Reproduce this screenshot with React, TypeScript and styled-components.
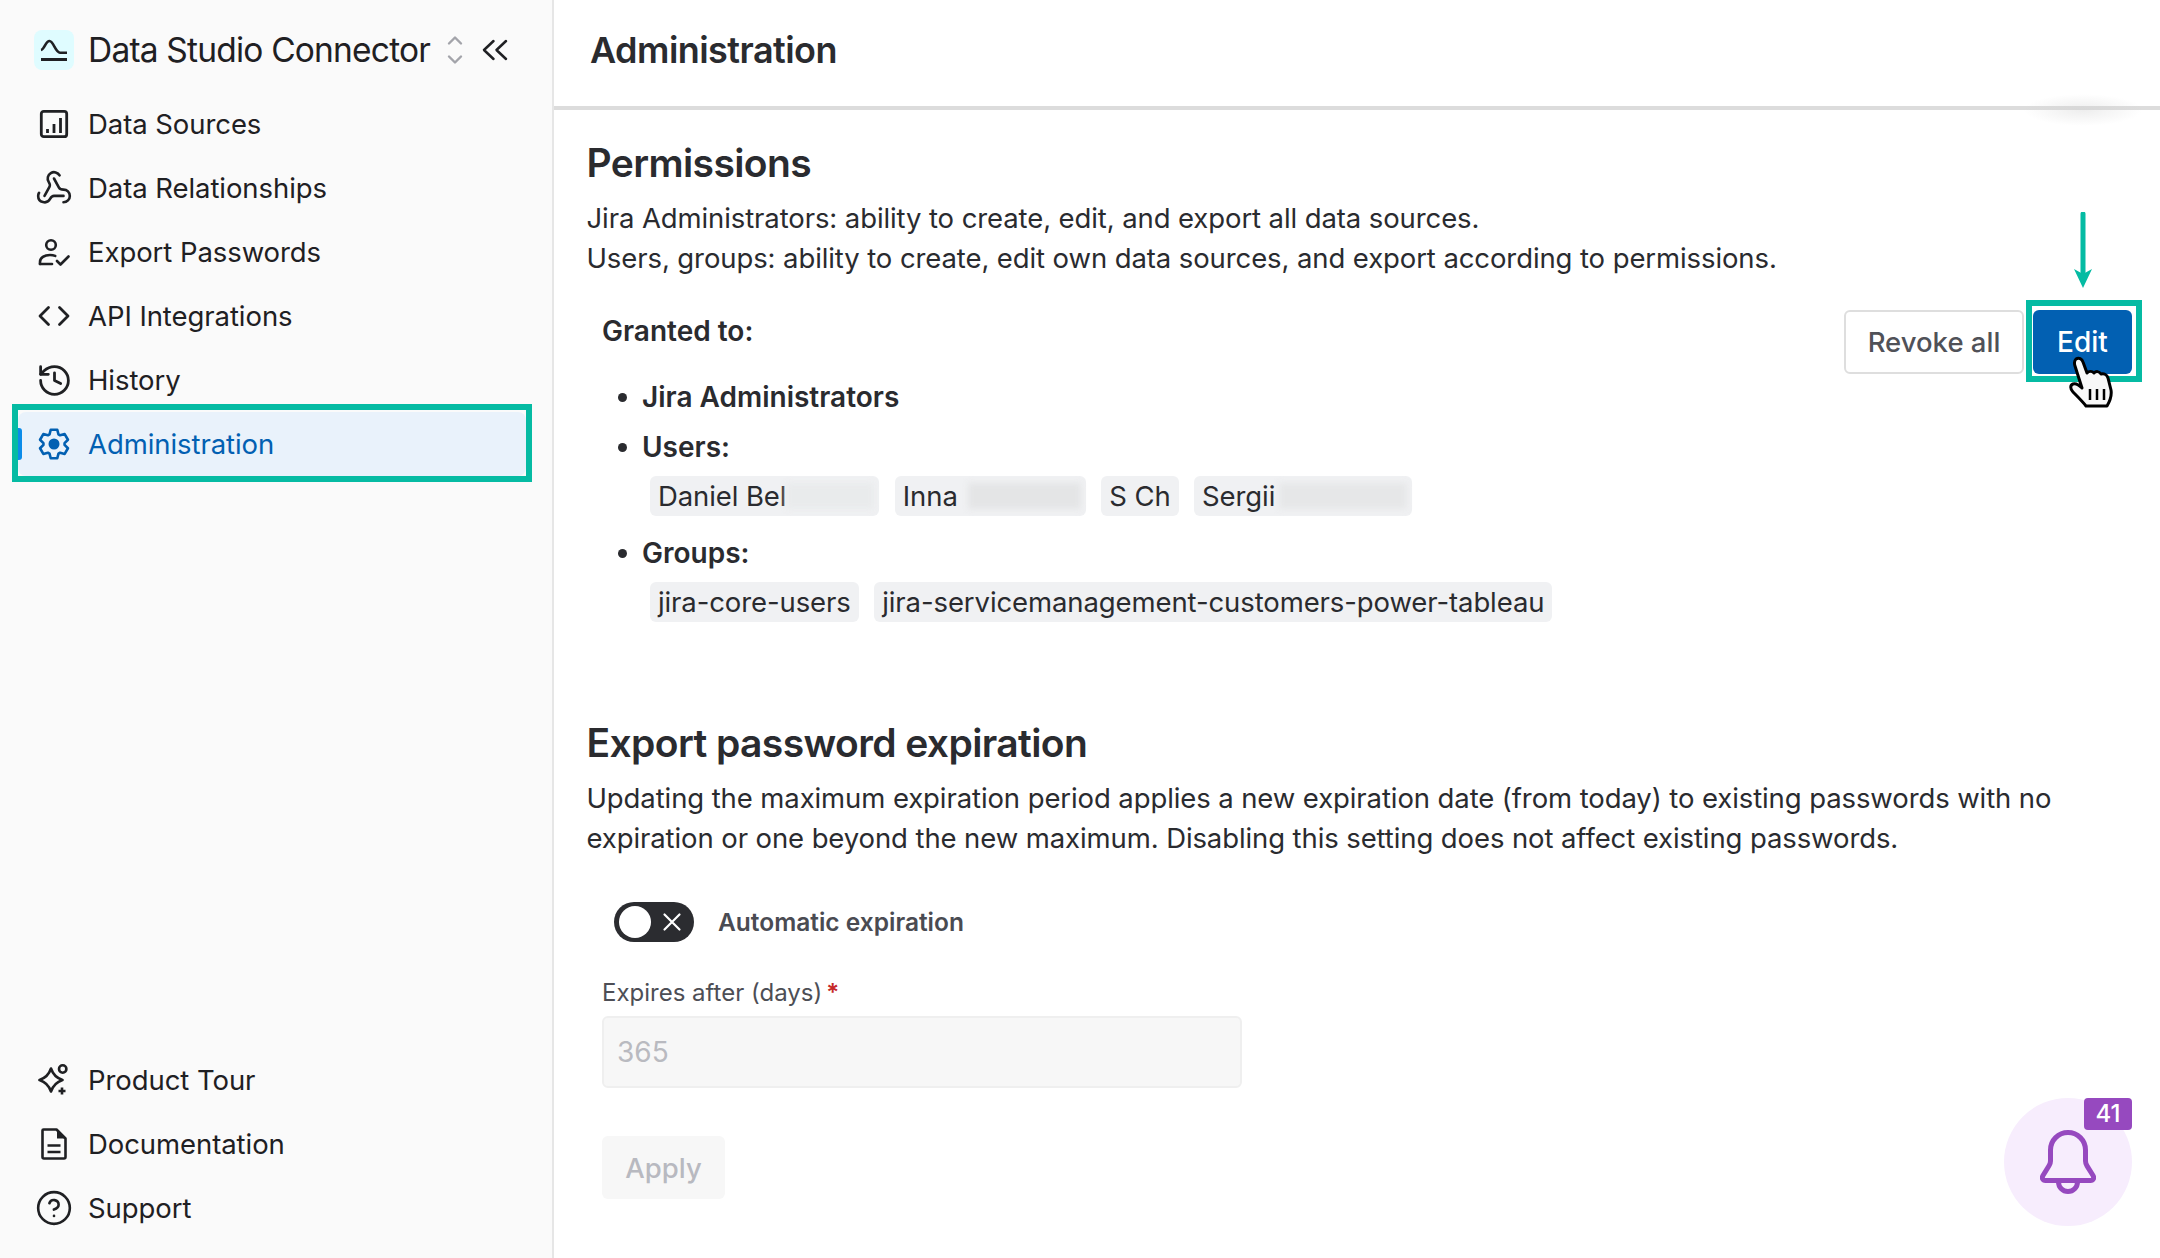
import type { ReactNode } from 'react';
import { Webhook, History, CircleHelp } from 'lucide-react';
import styled, { createGlobalStyle } from 'styled-components';

const GlobalStyle = createGlobalStyle`
  html, body {
    margin: 0;
    padding: 0;
    background: #fff;
  }
  * {
    box-sizing: border-box;
  }
  body {
    font-family: Inter, "Liberation Sans", sans-serif;
    color: #1f2023;
  }
`;

const Page = styled.div`
  width: 2160px;
  height: 1258px;
  display: flex;
  position: relative;
  overflow: hidden;
  background: #fff;
`;

const Sidebar = styled.aside`
  width: 554px;
  flex-shrink: 0;
  height: 100%;
  background: #fafafa;
  border-right: 2px solid #e6e6e6;
  display: flex;
  flex-direction: column;
  justify-content: space-between;
  padding: 30px 26px 18.5px 18px;
`;

const Brand = styled.div`
  display: flex;
  align-items: center;
  height: 40px;
  padding-left: 16px;
  margin-bottom: 22.5px;
`;

const LogoTile = styled.div`
  width: 40px;
  height: 40px;
  border-radius: 8px;
  background: #dffcff;
  flex-shrink: 0;
`;

const BrandName = styled.span`
  margin-left: 14px;
  font-size: 33.5px;
  letter-spacing: -0.8px;
  color: #1f2023;
  white-space: nowrap;
`;

const BrandActions = styled.div`
  display: flex;
  align-items: center;
  margin-left: 17px;
  gap: 19px;
  color: #1f2023;
`;

const Nav = styled.nav`
  display: flex;
  flex-direction: column;
`;

const NavItem = styled.div<{ $active?: boolean }>`
  position: relative;
  height: 63.9px;
  display: flex;
  align-items: center;
  gap: 19px;
  padding-left: 21px;
  border-radius: 8px;
  font-size: 27.5px;
  letter-spacing: -0.07px;
  white-space: nowrap;
  color: ${(p) => (p.$active ? '#0260b2' : '#1f2023')};
  background: ${(p) => (p.$active ? '#e9f2fb' : 'transparent')};
`;

const NavIcon = styled.span`
  width: 30px;
  height: 30px;
  display: flex;
  align-items: center;
  justify-content: center;
  flex-shrink: 0;
  svg {
    flex-shrink: 0;
  }
`;

const ActiveBar = styled.span`
  position: absolute;
  left: 0;
  top: 16px;
  width: 4px;
  height: 32px;
  border-radius: 0 3px 3px 0;
  background: #0b8ce9;
`;

const NavHighlight = styled.span`
  position: absolute;
  inset: -8px -6px -6px -6px;
  border: 6px solid #05bba3;
  pointer-events: none;
`;

const Main = styled.main`
  flex: 1;
  min-width: 0;
  display: flex;
  flex-direction: column;
`;

const TopBar = styled.header`
  position: relative;
  height: 110px;
  flex-shrink: 0;
  border-bottom: 4px solid #dcdcdc;
  padding-left: 36px;
  display: flex;
  align-items: center;
`;

const TopTitle = styled.h1`
  margin: 0 0 6px;
  font-size: 36px;
  font-weight: 600;
  letter-spacing: -0.55px;
  color: #2a2b2f;
`;

// soft smudge left over the divider in the original capture
const TopShadow = styled.span`
  position: absolute;
  right: 17px;
  bottom: -20px;
  width: 120px;
  height: 32px;
  background: radial-gradient(ellipse at center, rgba(205, 205, 205, 0.35) 0%, rgba(205, 205, 205, 0) 70%);
`;

const Content = styled.div`
  padding: 29px 28px 0 32.5px;
`;

const SectionTitle = styled.h2<{ $gap?: number }>`
  margin: ${(p) => p.$gap ?? 0}px 0 11px;
  font-size: 39px;
  line-height: 48px;
  font-weight: 600;
  letter-spacing: -0.6px;
  color: #2a2b2f;
`;

const Text = styled.p`
  margin: 0;
  font-size: 27.5px;
  letter-spacing: -0.1px;
  line-height: 40px;
  color: #2a2b2f;
`;

const GrantRow = styled.div`
  margin-top: 32px;
  display: flex;
  justify-content: space-between;
  align-items: flex-start;
`;

const GrantInfo = styled.div`
  padding-left: 15.5px;
`;

const GrantLabel = styled.div`
  font-size: 28px;
  line-height: 42px;
  font-weight: 600;
  color: #2a2b2f;
`;

const GrantList = styled.ul`
  list-style: none;
  margin: 25px 0 0;
  padding: 0 0 0 40px;
`;

const GrantItem = styled.li`
  position: relative;
  margin-bottom: 10px;
  font-size: 28px;
  line-height: 40px;
  font-weight: 600;
  color: #2a2b2f;
  &::before {
    content: '';
    position: absolute;
    left: -24px;
    top: 16px;
    width: 9px;
    height: 9px;
    border-radius: 50%;
    background: #2a2b2f;
  }
`;

const ChipRow = styled.div`
  display: flex;
  gap: 15.5px;
  margin: 9px 0 17px 8px;
`;

const Chip = styled.span`
  display: inline-flex;
  align-items: center;
  height: 40px;
  padding: 0 8px;
  border-radius: 6px;
  background: #f0f1f3;
  font-size: 27.5px;
  letter-spacing: -0.1px;
  font-weight: 400;
  white-space: nowrap;
  color: #2a2b2f;
`;

const Redacted = styled.span<{ $width: number; $offset: number; $shade: string }>`
  display: block;
  width: ${(p) => p.$width}px;
  height: 26px;
  margin-left: ${(p) => p.$offset}px;
  margin-right: -3px;
  background: ${(p) => p.$shade};
  filter: blur(3px);
`;

const Actions = styled.div`
  display: flex;
  gap: 9px;
`;

const OutlineButton = styled.button`
  width: 180px;
  height: 64px;
  border: 2px solid #dedede;
  border-radius: 6px;
  background: #fff;
  font: 500 27.5px Inter, sans-serif;
  color: #505158;
`;

const EditWrap = styled.div`
  position: relative;
`;

const PrimaryButton = styled.button`
  display: block;
  width: 99px;
  height: 64px;
  border: 0;
  border-radius: 6px;
  background: #0260b2;
  font: 500 28px Inter, sans-serif;
  color: #fff;
`;

const EditHighlight = styled.span`
  position: absolute;
  inset: -10px -10px -8px -7px;
  border: 6px solid #05bba3;
  pointer-events: none;
`;

const ArrowMark = styled.svg`
  position: absolute;
  left: 40px;
  top: -98px;
`;

const HandMark = styled.svg`
  position: absolute;
  left: 34px;
  top: 46px;
`;

const ToggleRow = styled.div`
  display: flex;
  align-items: center;
  gap: 24px;
  margin: 44px 0 0 27.5px;
`;

const Toggle = styled.div`
  width: 80px;
  height: 40px;
  border-radius: 20px;
  background: #2b2c30;
  display: flex;
  align-items: center;
  justify-content: space-between;
  padding: 0 12px 0 5px;
`;

const ToggleKnob = styled.span`
  width: 32px;
  height: 32px;
  border-radius: 50%;
  background: #fff;
`;

const ToggleLabel = styled.span`
  font-size: 24.5px;
  font-weight: 600;
  color: #4a4b52;
`;

const Form = styled.div`
  padding-left: 15.5px;
`;

const FieldLabel = styled.label`
  display: block;
  margin-top: 35px;
  font-size: 24px;
  line-height: 32px;
  color: #4d4e55;
`;

const Required = styled.span`
  color: #c62828;
  font-weight: 600;
  margin-left: 4px;
`;

const Field = styled.div`
  margin-top: 7px;
  width: 640px;
  height: 72px;
  padding: 0 13px;
  border: 2px solid #efefef;
  border-radius: 6px;
  background: #f7f7f7;
  font-size: 28px;
  line-height: 69px;
  color: #b9bac0;
`;

const DisabledButton = styled.button`
  display: block;
  margin-top: 48px;
  width: 123px;
  height: 63px;
  border: 0;
  border-radius: 6px;
  background: #f7f7f7;
  font: 500 27.5px Inter, sans-serif;
  color: #b8b9c0;
`;

const BellBubble = styled.div`
  position: absolute;
  right: 28px;
  bottom: 32px;
  width: 128px;
  height: 128px;
  border-radius: 50%;
  background: #f7edfd;
  display: flex;
  align-items: center;
  justify-content: center;
`;

const BellBadge = styled.span`
  position: absolute;
  right: 0;
  top: 0;
  width: 48px;
  height: 32px;
  border-radius: 4px;
  background: #9649bf;
  font-size: 24px;
  font-weight: 500;
  line-height: 32px;
  text-align: center;
  color: #fff;
`;

const LogoIcon = () => (
  <svg width="40" height="40" viewBox="0 0 40 40" fill="none" stroke="#1f2023" strokeLinecap="butt">
    <path d="M7 20c3.500-.5 4.500-9 8.500-9 4 0 6 11.700 10.500 11.700h7" strokeWidth="2.6" />
    <path d="M7 29.500h26" strokeWidth="3" />
  </svg>
);

const UpDownIcon = () => (
  <svg width="16" height="32" viewBox="0 0 16 32" fill="none" stroke="#a3a4aa" strokeWidth="2.4" strokeLinecap="round" strokeLinejoin="round">
    <path d="M2 9.500l6-6 6 6" />
    <path d="M2 22.500l6 6 6-6" />
  </svg>
);

const CollapseIcon = () => (
  <svg width="26" height="22" viewBox="0 0 26 22" fill="none" stroke="currentColor" strokeWidth="2.5" strokeLinecap="round" strokeLinejoin="round">
    <path d="M11.500 2L2 11l9.500 9" />
    <path d="M24 2l-9.500 9 9.500 9" />
  </svg>
);

const SourcesIcon = () => (
  <svg width="30" height="30" viewBox="0 0 30 30" fill="none" stroke="currentColor" strokeWidth="2.800">
    <rect x="2.300" y="2.300" width="25.400" height="25.400" rx="2.500" />
    <path d="M8.500 24v-4M15 24v-9M21.500 24V9" />
  </svg>
);

const UserCheckIcon = () => (
  <svg width="32" height="30" viewBox="0 0 32 30" fill="none" stroke="currentColor" strokeWidth="2.600" strokeLinecap="round" strokeLinejoin="round">
    <circle cx="13" cy="8" r="4.800" />
    <path d="M2 27v-2c0-4.200 4.400-7 10-7 2 0 3.700.3 5.200.9" />
    <path d="M2 27h12" />
    <path d="M19 24l3.500 3.500 8-8" />
  </svg>
);

const CodeIcon = () => (
  <svg width="32" height="30" viewBox="0 0 32 30" fill="none" stroke="currentColor" strokeWidth="2.800" strokeLinecap="round" strokeLinejoin="round">
    <path d="M10.500 6.500L2 15l8.500 8.500" />
    <path d="M21.500 6.500L30 15l-8.500 8.500" />
  </svg>
);

const gearPoints = Array.from({ length: 6 }, (_, tooth) =>
  [
    [-25, 10.6],
    [-13, 14.6],
    [13, 14.6],
    [25, 10.6],
  ]
    .map(([offset, radius]) => {
      const angle = ((tooth * 60 + offset) * Math.PI) / 180;
      return `${(16 + radius * Math.sin(angle)).toFixed(2)},${(16 - radius * Math.cos(angle)).toFixed(2)}`;
    })
    .join(' '),
).join(' ');

const GearIcon = () => (
  <svg width="32" height="32" viewBox="0 0 32 32" fill="none" stroke="currentColor" strokeWidth="2.600" strokeLinejoin="round">
    <polygon points={gearPoints} />
    <circle cx="16" cy="16" r="5.500" fill="currentColor" stroke="none" />
  </svg>
);

const TourIcon = () => (
  <svg width="32" height="32" viewBox="0 0 32 32" fill="none" stroke="currentColor" strokeWidth="2.600" strokeLinejoin="round">
    <path d="M13 4.500c2 6 5.500 9.500 11.500 11.500-6 2-9.500 5.500-11.500 11.500C11 21.500 7.500 18 1.500 16 7.500 14 11 10.500 13 4.500z" />
    <circle cx="24.700" cy="5" r="3.700" />
    <path d="M24 23.500v7M20.500 27h7" />
  </svg>
);

const DocIcon = () => (
  <svg width="30" height="32" viewBox="0 0 30 32" fill="none">
    <path d="M4.500 1.500h13L26.500 10.500V29c0 .9-.6 1.500-1.500 1.500H5c-.9 0-1.500-.6-1.500-1.500V2.500c0-.6.400-1 1-1z" stroke="currentColor" strokeWidth="2.600" strokeLinejoin="round" />
    <path d="M18 1.500l8.500 9H18z" fill="currentColor" />
    <path d="M8.500 17.500h13M8.500 24h13" stroke="currentColor" strokeWidth="2.600" />
  </svg>
);

const BellIcon = () => (
  <svg width="56" height="64" viewBox="0 0 56 64" fill="none" stroke="#9649bf" strokeWidth="5" strokeLinejoin="round">
    <path d="M10.500 20a17.500 17.500 0 0 1 35 0v11c0 2 .5 3.200 1.500 4.800l6 9.700c1.500 2.500.3 5-2.500 5h-45c-2.800 0-4-2.500-2.500-5l6-9.700c1-1.600 1.500-2.800 1.500-4.800z" />
    <path d="M18.500 52a9.500 9.500 0 0 0 19 0" />
  </svg>
);

interface LinkData {
  label: string;
  icon: ReactNode;
  active?: boolean;
}

const topLinks: LinkData[] = [
  { label: 'Data Sources', icon: <SourcesIcon /> },
  { label: 'Data Relationships', icon: <Webhook size={38} strokeWidth={1.65} /> },
  { label: 'Export Passwords', icon: <UserCheckIcon /> },
  { label: 'API Integrations', icon: <CodeIcon /> },
  { label: 'History', icon: <History size={37} strokeWidth={1.8} /> },
  { label: 'Administration', icon: <GearIcon />, active: true },
];

const bottomLinks: LinkData[] = [
  { label: 'Product Tour', icon: <TourIcon /> },
  { label: 'Documentation', icon: <DocIcon /> },
  { label: 'Support', icon: <CircleHelp size={38} strokeWidth={1.65} /> },
];

function SideLink({ label, icon, active }: LinkData) {
  return (
    <NavItem $active={active}>
      {active && <ActiveBar />}
      <NavIcon>{icon}</NavIcon>
      {label}
      {active && <NavHighlight />}
    </NavItem>
  );
}

export default function App() {
  return (
    <Page>
      <GlobalStyle />
      <Sidebar>
        <div>
          <Brand>
            <LogoTile>
              <LogoIcon />
            </LogoTile>
            <BrandName>Data Studio Connector</BrandName>
            <BrandActions>
              <UpDownIcon />
              <CollapseIcon />
            </BrandActions>
          </Brand>
          <Nav>
            {topLinks.map((link) => (
              <SideLink key={link.label} {...link} />
            ))}
          </Nav>
        </div>
        <Nav>
          {bottomLinks.map((link) => (
            <SideLink key={link.label} {...link} />
          ))}
        </Nav>
      </Sidebar>
      <Main>
        <TopBar>
          <TopTitle>Administration</TopTitle>
          <TopShadow />
        </TopBar>
        <Content>
          <SectionTitle>Permissions</SectionTitle>
          <Text>Jira Administrators: ability to create, edit, and export all data sources.</Text>
          <Text>Users, groups: ability to create, edit own data sources, and export according to permissions.</Text>
          <GrantRow>
            <GrantInfo>
              <GrantLabel>Granted to:</GrantLabel>
              <GrantList>
                <GrantItem>Jira Administrators</GrantItem>
                <GrantItem>
                  Users:
                  <ChipRow>
                    <Chip>
                      Daniel Bel
                      <Redacted $width={88} $offset={0} $shade="#e9ebec" />
                    </Chip>
                    <Chip>
                      Inna
                      <Redacted $width={113} $offset={10} $shade="#e4e5e6" />
                    </Chip>
                    <Chip>S Ch</Chip>
                    <Chip>
                      Sergii
                      <Redacted $width={128} $offset={4} $shade="#e6e7e8" />
                    </Chip>
                  </ChipRow>
                </GrantItem>
                <GrantItem>
                  Groups:
                  <ChipRow>
                    <Chip>jira-core-users</Chip>
                    <Chip>jira-servicemanagement-customers-power-tableau</Chip>
                  </ChipRow>
                </GrantItem>
              </GrantList>
            </GrantInfo>
            <Actions>
              <OutlineButton>Revoke all</OutlineButton>
              <EditWrap>
                <PrimaryButton>Edit</PrimaryButton>
                <EditHighlight />
                <ArrowMark width="20" height="76" viewBox="0 0 20 76">
                  <path d="M10 2v60" stroke="#05bba3" strokeWidth="5" strokeLinecap="round" />
                  <path d="M1 57l9 5 9-5-9 19z" fill="#05bba3" />
                </ArrowMark>
                <HandMark width="48" height="52" viewBox="0 0 46 52">
                  <path
                    d="M8 3c3-2 6 0 7 3l4 11c2-2 5-2 7 0 2-2 5-2 7 1 3-1 6 1 7 4l3 12c1 6-1 11-4 16H18c-3-4-8-9-13-14-3-3-3-7 0-8 3-1 6 1 9 4L7 10C6 7 6 5 8 3z"
                    fill="#f8f8f8"
                    stroke="#000"
                    strokeWidth="3"
                    strokeLinejoin="round"
                  />
                  <path d="M22 33v11M29 33v11M36 33v11" stroke="#000" strokeWidth="2.500" />
                </HandMark>
              </EditWrap>
            </Actions>
          </GrantRow>
          <SectionTitle $gap={80}>Export password expiration</SectionTitle>
          <Text>
            Updating the maximum expiration period applies a new expiration date (from today) to existing passwords with
            no expiration or one beyond the new maximum. Disabling this setting does not affect existing passwords.
          </Text>
          <ToggleRow>
            <Toggle>
              <ToggleKnob />
              <svg width="20" height="20" viewBox="0 0 20 20" stroke="#fff" strokeWidth="2.200" strokeLinecap="round">
                <path d="M2.500 2.500l15 15M17.500 2.500l-15 15" />
              </svg>
            </Toggle>
            <ToggleLabel>Automatic expiration</ToggleLabel>
          </ToggleRow>
          <Form>
            <FieldLabel>
              Expires after (days)
              <Required>*</Required>
            </FieldLabel>
            <Field>365</Field>
            <DisabledButton>Apply</DisabledButton>
          </Form>
        </Content>
      </Main>
      <BellBubble>
        <BellIcon />
        <BellBadge>41</BellBadge>
      </BellBubble>
    </Page>
  );
}
